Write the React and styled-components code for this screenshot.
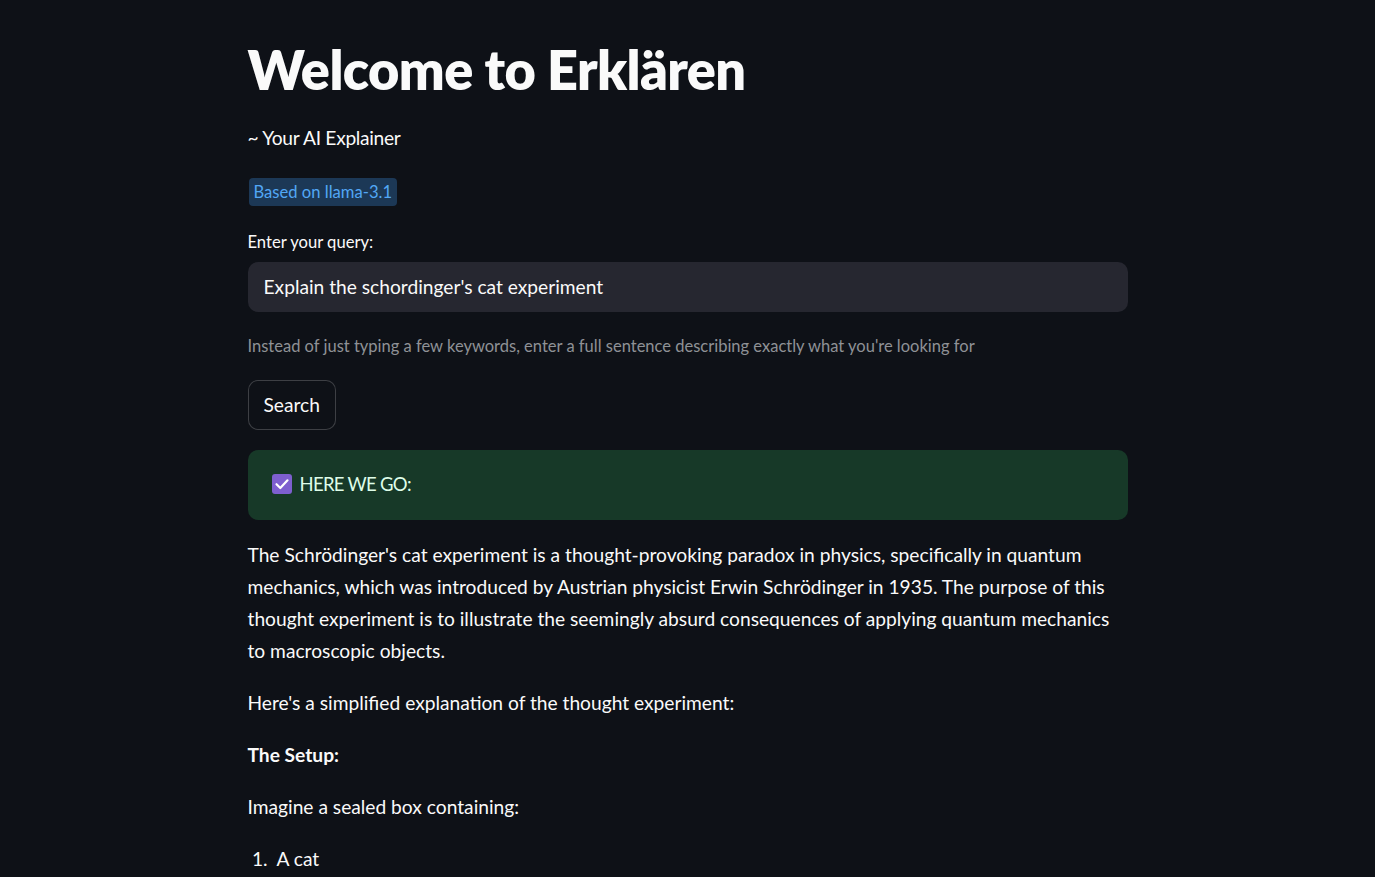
import React, { useState } from "react";
import styled, { createGlobalStyle } from "styled-components";

const Global = createGlobalStyle`
  html, body {
    margin: 0;
    padding: 0;
    background: #0e1117;
  }
  body {
    font-family: "Lato", "Liberation Sans", sans-serif;
    color: #fafafa;
  }
`;

const Page = styled.div`
  height: 877px;
  background: #0e1117;
  display: flex;
  justify-content: center;
  overflow: hidden;
`;

const Main = styled.div`
  width: 880px;
  padding-top: 37px;
  display: flex;
  flex-direction: column;
`;

const Title = styled.h1`
  margin: 0;
  font-size: 54px;
  line-height: 66px;
  font-weight: 800;
  letter-spacing: -0.6px;
  color: #fafafa;
`;

const Text = styled.p`
  margin: ${(p) => p.$mt || 0}px 0 0;
  font-size: 19.2px;
  line-height: 32px;
  color: #fafafa;
  font-weight: ${(p) => (p.$bold ? 700 : 400)};
  letter-spacing: ${(p) => p.$ls || 0}px;
`;

const Badge = styled.span`
  align-self: flex-start;
  margin: 24px 0 0 1px;
  height: 28px;
  padding: 0 5px;
  display: flex;
  align-items: center;
  background: #1c3856;
  color: #52a7f5;
  border-radius: 4px;
  font-size: 16.6px;
`;

const Label = styled.label`
  margin-top: 22px;
  font-size: 16.6px;
  line-height: 28px;
  color: #fafafa;
`;

const Input = styled.input`
  margin-top: 6px;
  box-sizing: border-box;
  width: 100%;
  height: 50px;
  border: none;
  outline: none;
  border-radius: 10px;
  background: #262730;
  color: #fafafa;
  padding: 0 16px 2px;
  font-family: inherit;
  font-size: 19.2px;
`;

const Help = styled.div`
  margin-top: 20px;
  font-size: 16.5px;
  line-height: 28px;
  color: #8f9196;
`;

const Button = styled.button`
  align-self: flex-start;
  margin-top: 20px;
  height: 50px;
  padding: 0 15px 2px;
  border-radius: 10px;
  border: 1px solid rgba(250, 250, 250, 0.2);
  background: #0e1117;
  color: #fafafa;
  font-family: inherit;
  font-size: 19.2px;
  cursor: pointer;
`;

const Success = styled.div`
  margin-top: 20px;
  height: 70px;
  box-sizing: border-box;
  padding: 0 24px 2px;
  border-radius: 10px;
  background: #173928;
  color: #dffde9;
  display: flex;
  align-items: center;
  gap: 8px;
  font-size: 18.5px;
  letter-spacing: -0.7px;
`;

const Body = styled.div`
  margin-top: 19px;
  display: flex;
  flex-direction: column;
`;

const List = styled.ol`
  margin: 20px 0 0;
  padding-left: 25px;
  font-size: 19.2px;
  line-height: 32px;

  li {
    padding-left: 4px;
  }
`;

const CheckIcon = () => (
  <svg width="20" height="20" viewBox="0 0 20 20">
    <rect x="0" y="0" width="20" height="20" rx="3" fill="#7e5fcf" />
    <path d="M4.5 10.2 L8.3 14 L15.5 6.3" stroke="#fff" strokeWidth="2.2" fill="none" strokeLinecap="round" strokeLinejoin="round" />
  </svg>
);

const App = () => {
  const [query, setQuery] = useState("Explain the schordinger's cat experiment");

  return (
    <Page>
      <Global />
      <Main>
        <Title>Welcome to Erklären</Title>
        <Text $mt={19} $ls={-0.3}>~ Your AI Explainer</Text>
        <Badge>Based on llama-3.1</Badge>
        <Label>Enter your query:</Label>
        <Input value={query} onChange={(e) => setQuery(e.target.value)} />
        <Help>Instead of just typing a few keywords, enter a full sentence describing exactly what you're looking for</Help>
        <Button>Search</Button>
        <Success>
          <CheckIcon />
          HERE WE GO:
        </Success>
        <Body>
          <Text>
            The Schrödinger's cat experiment is a thought-provoking paradox in physics, specifically in quantum mechanics, which was introduced by Austrian physicist Erwin Schrödinger in 1935. The purpose of this thought experiment is to illustrate the seemingly absurd consequences of applying quantum mechanics to macroscopic objects.
          </Text>
          <Text $mt={20}>Here's a simplified explanation of the thought experiment:</Text>
          <Text $mt={20} $bold>The Setup:</Text>
          <Text $mt={20}>Imagine a sealed box containing:</Text>
          <List>
            <li>A cat</li>
          </List>
        </Body>
      </Main>
    </Page>
  );
};

export default App;
